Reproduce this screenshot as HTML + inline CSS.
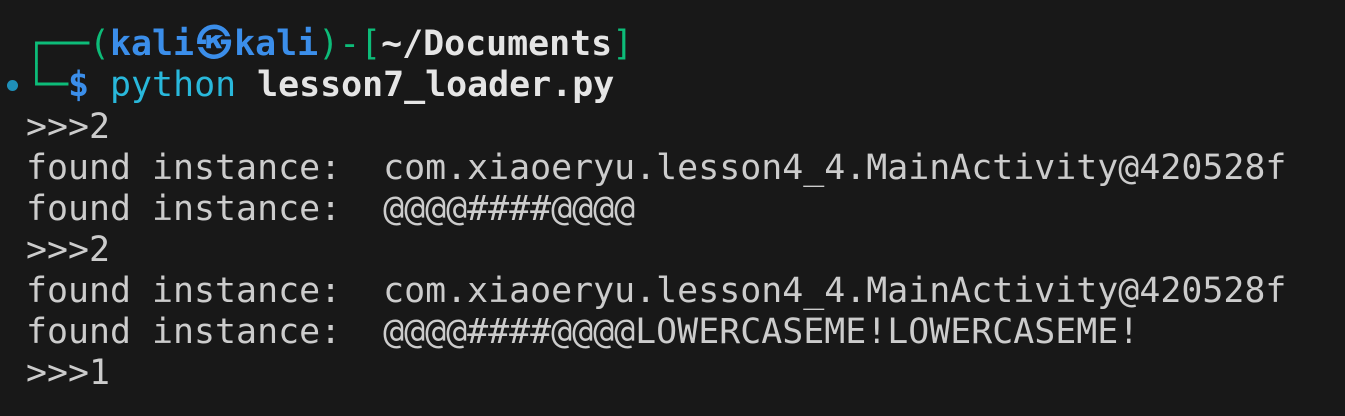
<!DOCTYPE html>
<html><head><meta charset="utf-8"><style>
html,body{margin:0;padding:0;background:#181818;width:1345px;height:416px;overflow:hidden}
.t{position:absolute;left:26px;top:25px;font-family:"DejaVu Sans Mono","Liberation Mono",monospace;font-size:34.9px;line-height:41px;color:#cccccc;white-space:pre}
.p{left:26px;top:24px}
.g{color:#0dbc79}
.b{color:#3b8eea;font-weight:bold}
.c{color:#29b8db}
.w{font-weight:bold;color:#e5e5e5}
.k{display:inline-block;width:40px;text-align:center}
.dot{position:absolute;left:7px;top:80px;width:11px;height:11px;border-radius:50%;background:#1f8fb8}
</style></head><body>
<div class="dot"></div>
<div class="t p"><span class="g">┌──(</span><span class="b">kali<span class="k">㉿</span>kali</span><span class="g">)-[</span><span class="w">~/Documents</span><span class="g">]</span>
<span class="g">└─</span><span class="b">$</span> <span class="c">python</span> <span class="w">lesson7_loader.py</span></div>
<div class="t" style="top:107px">&gt;&gt;&gt;2
found instance:  com.xiaoeryu.lesson4_4.MainActivity@420528f
found instance:  @@@@####@@@@
&gt;&gt;&gt;2
found instance:  com.xiaoeryu.lesson4_4.MainActivity@420528f
found instance:  @@@@####@@@@LOWERCASEME!LOWERCASEME!
&gt;&gt;&gt;1</div>
</body></html>
